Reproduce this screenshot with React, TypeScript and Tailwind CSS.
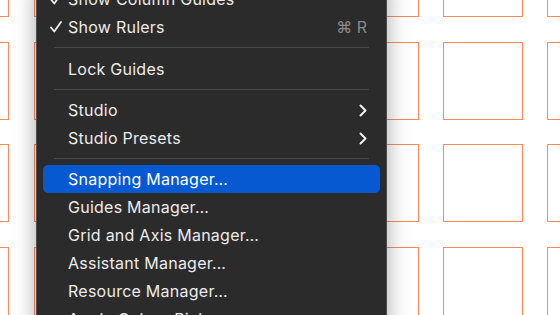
import React from 'react';

type Item =
  | { kind: 'item'; label: string; checked?: boolean; shortcut?: string; submenu?: boolean; active?: boolean }
  | { kind: 'sep'; tall?: boolean };

const items: Item[] = [
  { kind: 'item', label: 'Show Column Guides', checked: true },
  { kind: 'item', label: 'Show Rulers', checked: true, shortcut: '⌘ R' },
  { kind: 'sep', tall: true },
  { kind: 'item', label: 'Lock Guides' },
  { kind: 'sep' },
  { kind: 'item', label: 'Studio', submenu: true },
  { kind: 'item', label: 'Studio Presets', submenu: true },
  { kind: 'sep' },
  { kind: 'item', label: 'Snapping Manager…', active: true },
  { kind: 'item', label: 'Guides Manager…' },
  { kind: 'item', label: 'Grid and Axis Manager…' },
  { kind: 'item', label: 'Assistant Manager…' },
  { kind: 'item', label: 'Resource Manager…' },
  { kind: 'item', label: 'Apple Colour Picker…' },
];

// artboard rectangles on the canvas
const cols = [-71, 34, 136, 238, 339, 443, 547];
const rows = [-61, 42, 144, 247];

const Check = () => (
  <svg width="12" height="12" viewBox="0 0 12 12" fill="none">
    <path d="M1 6.5 L4.3 10.5 L11 1" stroke="#ececec" strokeWidth="1.8" strokeLinecap="round" strokeLinejoin="round" />
  </svg>
);

const Chevron = () => (
  <svg width="8" height="13" viewBox="0 0 8 13" fill="none">
    <path d="M1.5 1.5 L6.5 6.5 L1.5 11.5" stroke="#f2f2f2" strokeWidth="2" strokeLinecap="round" strokeLinejoin="round" />
  </svg>
);

const App: React.FC = () => {
  return (
    <div className="relative w-[560px] h-[315px] overflow-hidden bg-white" style={{ fontFamily: 'Inter, "Noto Sans", sans-serif' }}>
      {rows.map((y) =>
        cols.map((x) => (
          <div
            key={`${x}-${y}`}
            className="absolute w-[80px] h-[78px] border border-[#fb8a5b]"
            style={{ left: x, top: y }}
          />
        ))
      )}

      <div className="absolute left-[36px] top-[-20px] w-[351px] pt-[4px] bg-[#2b2b2b] border border-[#4e4e4e] rounded-[8px] shadow-[0_0_22px_rgba(0,0,0,0.35)]">
        {items.map((it, i) =>
          it.kind === 'sep' ? (
            <div key={i} className={`px-[17px] ${it.tall ? 'pt-[6px] pb-[7px]' : 'py-[6px]'}`}>
              <div className="h-px bg-[#474747]" />
            </div>
          ) : (
            <div key={i} className="px-[6px]">
              <div
                className={`h-[28px] flex items-center rounded-[5px] pr-[13px] text-[16px] ${
                  it.active ? 'bg-[#0659d0] text-white' : 'text-[#ececec]'
                }`}
              >
                <div className="w-[25px] flex justify-end pr-[6px]">{it.checked && <Check />}</div>
                <span className="flex-1 tracking-[0.25px]">{it.label}</span>
                {it.shortcut && <span className="text-[#8a8a8a]">{it.shortcut}</span>}
                {it.submenu && <Chevron />}
              </div>
            </div>
          )
        )}
      </div>
    </div>
  );
};

export default App;
